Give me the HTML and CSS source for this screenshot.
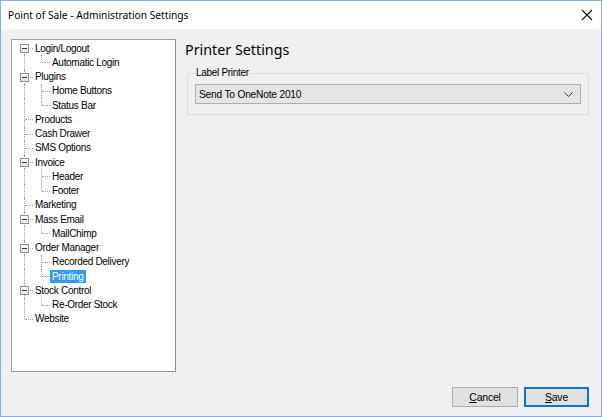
FILE: index.html
```html
<!DOCTYPE html>
<html>
<head>
<meta charset="utf-8">
<link rel="stylesheet" href="styles.css">
</head>
<body>
<div class="window">
  <div class="titlebar">
    <span class="title">Point of Sale - Administration Settings</span>
    <svg class="close" width="12" height="12" viewBox="0 0 12 12"><path d="M1 1L11 11M11 1L1 11" stroke="#111" stroke-width="1.1" fill="none"/></svg>
  </div>
  <div class="client">
    <div class="main">
      <div class="tree">
        <div class="row"><span class="g down"><span class="box"></span></span><span class="label">Login/Logout</span></div>
        <div class="row"><span class="g full nh"></span><span class="g up"></span><span class="label">Automatic Login</span></div>
        <div class="row"><span class="g full"><span class="box"></span></span><span class="label">Plugins</span></div>
        <div class="row"><span class="g full nh"></span><span class="g full"></span><span class="label">Home Buttons</span></div>
        <div class="row"><span class="g full nh"></span><span class="g up"></span><span class="label">Status Bar</span></div>
        <div class="row"><span class="g full"></span><span class="label">Products</span></div>
        <div class="row"><span class="g full"></span><span class="label">Cash Drawer</span></div>
        <div class="row"><span class="g full"></span><span class="label">SMS Options</span></div>
        <div class="row"><span class="g full"><span class="box"></span></span><span class="label">Invoice</span></div>
        <div class="row"><span class="g full nh"></span><span class="g full"></span><span class="label">Header</span></div>
        <div class="row"><span class="g full nh"></span><span class="g up"></span><span class="label">Footer</span></div>
        <div class="row"><span class="g full"></span><span class="label">Marketing</span></div>
        <div class="row"><span class="g full"><span class="box"></span></span><span class="label">Mass Email</span></div>
        <div class="row"><span class="g full nh"></span><span class="g up"></span><span class="label">MailChimp</span></div>
        <div class="row"><span class="g full"><span class="box"></span></span><span class="label">Order Manager</span></div>
        <div class="row"><span class="g full nh"></span><span class="g full"></span><span class="label">Recorded Delivery</span></div>
        <div class="row"><span class="g full nh"></span><span class="g up"></span><span class="label selected">Printing</span></div>
        <div class="row"><span class="g full"><span class="box"></span></span><span class="label">Stock Control</span></div>
        <div class="row"><span class="g full nh"></span><span class="g up"></span><span class="label">Re-Order Stock</span></div>
        <div class="row"><span class="g up"></span><span class="label">Website</span></div>
      </div>
      <div class="panel">
        <h1 class="heading">Printer Settings</h1>
        <fieldset class="group">
          <legend class="legend">Label Printer</legend>
          <div class="combo">
            <span class="combo-text">Send To OneNote 2010</span>
            <svg class="chev" width="9" height="5" viewBox="0 0 9 5"><path d="M0.5 0.5L4.5 4.5L8.5 0.5" stroke="#333" stroke-width="1" fill="none"/></svg>
          </div>
        </fieldset>
      </div>
    </div>
    <div class="footer">
      <button class="btn"><u>C</u>ancel</button>
      <button class="btn default"><u>S</u>ave</button>
    </div>
  </div>
</div>
</body>
</html>
```

FILE: styles.css
```css
html, body {
  margin: 0;
  padding: 0;
  background: #ffffff;
}
.window {
  width: 602px;
  height: 417px;
  box-sizing: border-box;
  border: 1px solid #7fb3e8;
  display: flex;
  flex-direction: column;
  background: #f0f0f0;
  font-family: "Liberation Sans", Arial, sans-serif;
}
.titlebar {
  height: 27px;
  flex: none;
  background: #ffffff;
  display: flex;
  align-items: center;
  justify-content: space-between;
  padding: 0 8px 1px 7px;
}
.title {
  font-family: "Noto Sans", sans-serif;
  font-size: 10.2px;
  color: #000;
}
.close {
  display: block;
}
.client {
  flex: 1;
  display: flex;
  flex-direction: column;
  padding: 10px 12px 10px 10px;
}
.main {
  display: flex;
  height: 333px;
  flex: none;
}
.tree {
  width: 165px;
  box-sizing: border-box;
  background: #fff;
  border: 1px solid #a0a0a0;
  border-right-color: #8b8f96;
  border-bottom-color: #8b8f96;
  padding: 1px 0 0 4px;
  font-size: 10px;
  letter-spacing: -0.3px;
  color: #000;
}
.row {
  display: flex;
  align-items: center;
  height: 14.25px;
}
.g {
  width: 17px;
  height: 100%;
  flex: none;
  position: relative;
}
.g::before {
  content: "";
  position: absolute;
  left: 8px;
  border-left: 1px dotted #a0a0a0;
}
.g.full::before { top: 0; bottom: 0; }
.g.up::before { top: 0; height: 7px; }
.g.down::before { top: 7px; bottom: 0; }
.g::after {
  content: "";
  position: absolute;
  left: 9px;
  right: 0;
  top: 7px;
  border-top: 1px dotted #a0a0a0;
}
.g.nh::after { display: none; }
.box {
  position: absolute;
  left: 4px;
  top: 3px;
  width: 7px;
  height: 7px;
  border: 1px solid #919191;
  background: linear-gradient(#ffffff, #e4e4e4);
  z-index: 1;
}
.box::before {
  content: "";
  position: absolute;
  left: 1px;
  top: 3px;
  width: 5px;
  height: 1px;
  background: #1e395b;
}
.label {
  padding: 0 2px;
  line-height: 13px;
  height: 13px;
  white-space: nowrap;
}
.label.selected {
  background: #3399ff;
  color: #fff;
}
.panel {
  flex: 1;
  margin-left: 9px;
  display: flex;
  flex-direction: column;
}
.heading {
  margin: 0;
  font-family: "Noto Sans", sans-serif;
  font-weight: normal;
  font-size: 14.3px;
  line-height: 21px;
  color: #000;
}
.group {
  margin: 7px 0 0 2px;
  padding: 0 7px 10px 7px;
  border: 1px solid #dcdcdc;
  min-width: 0;
}
.legend {
  padding: 0 1px;
  font-size: 10px;
  line-height: 12px;
  letter-spacing: -0.3px;
  color: #000;
}
.combo {
  margin-top: 5px;
  height: 20px;
  box-sizing: border-box;
  border: 1px solid #adadad;
  background: #e5e5e5;
  display: flex;
  align-items: center;
  justify-content: space-between;
  padding: 0 7px 0 3px;
  font-size: 10.2px;
  letter-spacing: -0.2px;
}
.chev { display: block; }
.footer {
  margin-top: 15px;
  display: flex;
  justify-content: flex-end;
  gap: 6px;
}
.btn {
  width: 66px;
  height: 20px;
  box-sizing: border-box;
  border: 1px solid #adadad;
  background: #e1e1e1;
  font-family: "Liberation Sans", Arial, sans-serif;
  font-size: 10.5px;
  letter-spacing: -0.2px;
  color: #000;
  padding: 0;
  margin: 0;
}
.btn.default {
  width: 65px;
  border: 1px solid #0078d7;
  box-shadow: inset 0 0 0 1px #0078d7;
}
```
